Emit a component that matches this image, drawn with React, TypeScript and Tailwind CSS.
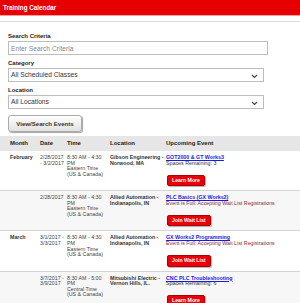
const rows = [
  {
    month: "February",
    date: ["2/28/2017", "- 3/2/2017"],
    time: ["8:30 AM - 4:30", "PM", "Eastern Time", "(US & Canada)"],
    location: ["Gibson Engineering -", "Norwood, MA"],
    title: "GOT2000 & GT Works3",
    note: "Spaces Remaining: 3",
    full: false,
  },
  {
    month: "",
    date: ["2/28/2017"],
    time: ["8:30 AM - 4:30", "PM", "Eastern Time", "(US & Canada)"],
    location: ["Allied Automation -", "Indianapolis, IN"],
    title: "PLC Basics (GX Works2)",
    note: "Event is Full: Accepting Wait List Registrations",
    full: true,
  },
  {
    month: "March",
    date: ["3/1/2017 -", "3/3/2017"],
    time: ["8:30 AM - 4:30", "PM", "Eastern Time", "(US & Canada)"],
    location: ["Allied Automation -", "Indianapolis, IN"],
    title: "GX Works2 Programming",
    note: "Event is Full: Accepting Wait List Registrations",
    full: true,
  },
  {
    month: "",
    date: ["3/7/2017 -", "3/9/2017"],
    time: ["8:30 AM - 5:00", "PM", "Central Time", "(US & Canada)"],
    location: ["Mitsubishi Electric -", "Vernon Hills, IL."],
    title: "CNC PLC Troubleshooting",
    note: "Spaces Remaining: 6",
    full: false,
  },
];

function Chevron() {
  return (
    <svg width="7" height="5" viewBox="0 0 7 5" className="absolute right-[5px] top-[5px]">
      <polyline points="1,1 3.5,3.5 6,1" fill="none" stroke="#444" strokeWidth="1.1" />
    </svg>
  );
}

function Field({ label, children }: { label: string; children: React.ReactNode }) {
  return (
    <div className="flex flex-col">
      <label className="h-[9px] text-[6px] font-bold leading-[9px] text-[#222]">{label}</label>
      {children}
    </div>
  );
}

export default function App() {
  return (
    <div className="h-[303px] w-[300px] overflow-hidden bg-white font-['Liberation_Sans',Arial,sans-serif] text-[#333]">
      <header className="flex h-[15px] items-center bg-[#e60000] px-[3px] shadow-[0_1px_0_#f4a0a0]">
        <h1 className="text-[6.3px] font-bold text-white">Training Calendar</h1>
      </header>
      <div className="h-[7px] border-b border-[#dcdcdc]" />

      <div className="flex flex-col gap-[4px] px-[8px] pt-[10px]">
        <Field label="Search Criteria">
          <input
            placeholder="Enter Search Criteria"
            className="h-[14px] w-[260px] border border-[#bdbdbd] px-[2px] text-[6.7px] text-[#333] placeholder:text-[#888] outline-none"
          />
        </Field>
        <Field label="Category">
          <div className="relative flex h-[14px] w-[256px] items-center border border-[#bdbdbd] px-[2px] text-[6.7px] text-[#333]">
            All Scheduled Classes
            <Chevron />
          </div>
        </Field>
        <Field label="Location">
          <div className="relative flex h-[14px] w-[256px] items-center border border-[#bdbdbd] px-[2px] text-[6.7px] text-[#333]">
            All Locations
            <Chevron />
          </div>
        </Field>
        <div className="pt-[2px]">
          <button className="flex h-[17px] w-[74px] items-center justify-center rounded-[3px] border border-[#aaa] bg-gradient-to-b from-white to-[#e2e2e2] text-[6.1px] font-bold text-[#333] shadow-[1px_1px_1px_rgba(0,0,0,0.35)]">
            View/Search Events
          </button>
        </div>
      </div>

      <table className="mt-[4px] w-[300px] table-fixed border-collapse text-left">
        <colgroup>
          <col className="w-[38px]" />
          <col className="w-[27px]" />
          <col className="w-[43px]" />
          <col className="w-[56px]" />
          <col />
        </colgroup>
        <thead>
          <tr className="h-[15px] bg-[#e6e6e6] text-[6px] font-bold text-[#222]">
            <th className="pl-[10px]">Month</th>
            <th className="pl-[2px]">Date</th>
            <th className="pl-[2px]">Time</th>
            <th className="pl-[2px]">Location</th>
            <th className="pl-[2px]">Upcoming Event</th>
          </tr>
        </thead>
        <tbody className="text-[5.3px] leading-[5.6px]">
          {rows.map((r, i) => (
            <tr key={i} className={`border-b border-[#d4d4d4] align-top ${i % 2 ? "bg-[#f7f7f7]" : "bg-white"}`}>
              <td className="pt-[4px] pl-[10px] font-bold text-[#333]">{r.month}</td>
              <td className="pt-[4px] pl-[2px] text-[#444]">
                {r.date.map((d) => (
                  <div key={d}>{d}</div>
                ))}
              </td>
              <td className="pt-[4px] pl-[2px] text-[#444]">
                {r.time.map((t) => (
                  <div key={t}>{t}</div>
                ))}
              </td>
              <td className="pt-[4px] pl-[2px] font-bold text-[#333]">
                {r.location.map((l) => (
                  <div key={l}>{l}</div>
                ))}
              </td>
              <td className="pt-[4px] pb-[4px] pl-[2px]">
                <div className="font-bold text-[#1a1ae6] underline">{r.title}</div>
                <div className={r.full ? "text-[#8b2a2a]" : "text-[#333]"}>{r.note}</div>
                <button className="mt-[8.5px] ml-[1px] flex h-[11.5px] items-center rounded-[2px] border border-[#b00000] bg-[#e8000b] px-[4px] text-[5.2px] font-bold text-white shadow-[1px_1px_1px_rgba(0,0,0,0.3)]">
                  {r.full ? "Join Wait List" : "Learn More"}
                </button>
              </td>
            </tr>
          ))}
        </tbody>
      </table>
    </div>
  );
}
